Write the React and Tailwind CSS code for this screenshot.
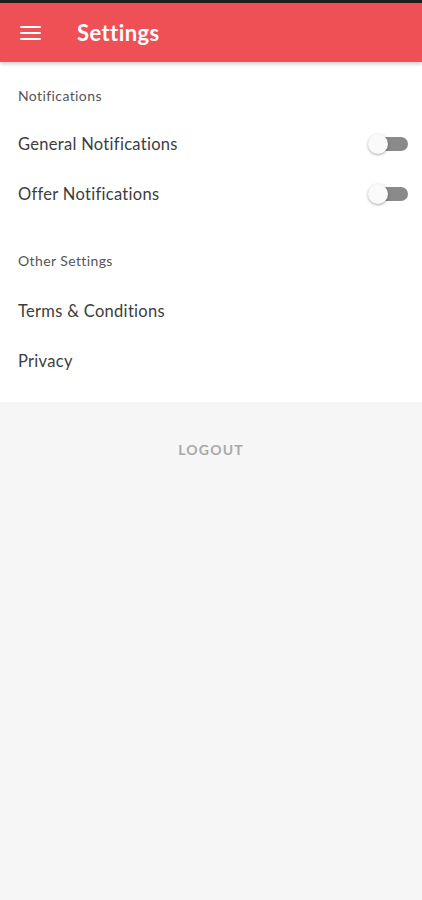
import React from "react";

function Toggle() {
  return (
    <div className="relative w-[40px] h-[20px] flex items-center">
      <div className="ml-[6px] w-[34px] h-[14px] rounded-full bg-[#8a8a8a]" />
      <div className="absolute left-0 top-0 w-[20px] h-[20px] rounded-full bg-[#fafafa] shadow-[0_1px_3px_rgba(0,0,0,0.35)]" />
    </div>
  );
}

export default function App() {
  const font = { fontFamily: "Lato, 'Open Sans', sans-serif" };
  const row = "h-[50px] flex items-center justify-between text-[16.5px] tracking-[0.3px] text-[#3d3d3d]";
  return (
    <div className="w-[422px] min-h-[900px] bg-[#f6f6f6] flex flex-col" style={font}>
      <div className="h-[3px] bg-[#1e1e1e]" />
      <div className="h-[59px] bg-[#ef5056] flex items-center shadow-[0_2px_4px_rgba(0,0,0,0.2)] relative z-10">
        <div className="ml-[20px] w-[21px] flex flex-col gap-[4px]">
          <div className="h-[2px] bg-white rounded" />
          <div className="h-[2px] bg-white rounded" />
          <div className="h-[2px] bg-white rounded" />
        </div>
        <div className="ml-[36px] text-white text-[22px] font-bold tracking-[0.4px]">Settings</div>
      </div>
      <div className="bg-white flex flex-col px-[18px] pb-[16px]">
        <div className="h-[57px] pt-[25px] text-[14px] leading-[18px] tracking-[0.4px] text-[#555]">Notifications</div>
        <div className={row}>
          <span>General Notifications</span>
          <div className="mr-[-4px]"><Toggle /></div>
        </div>
        <div className={row}>
          <span>Offer Notifications</span>
          <div className="mr-[-4px]"><Toggle /></div>
        </div>
        <div className="h-[67px] flex items-end pb-[16px] text-[14px] leading-[18px] tracking-[0.4px] text-[#555]">Other Settings</div>
        <div className={row}>Terms &amp; Conditions</div>
        <div className={row}>Privacy</div>
      </div>
      <div className="flex justify-center pt-[37px]">
        <span className="text-[14px] font-bold tracking-[1.2px] text-[#a8a8a8]">LOGOUT</span>
      </div>
    </div>
  );
}
